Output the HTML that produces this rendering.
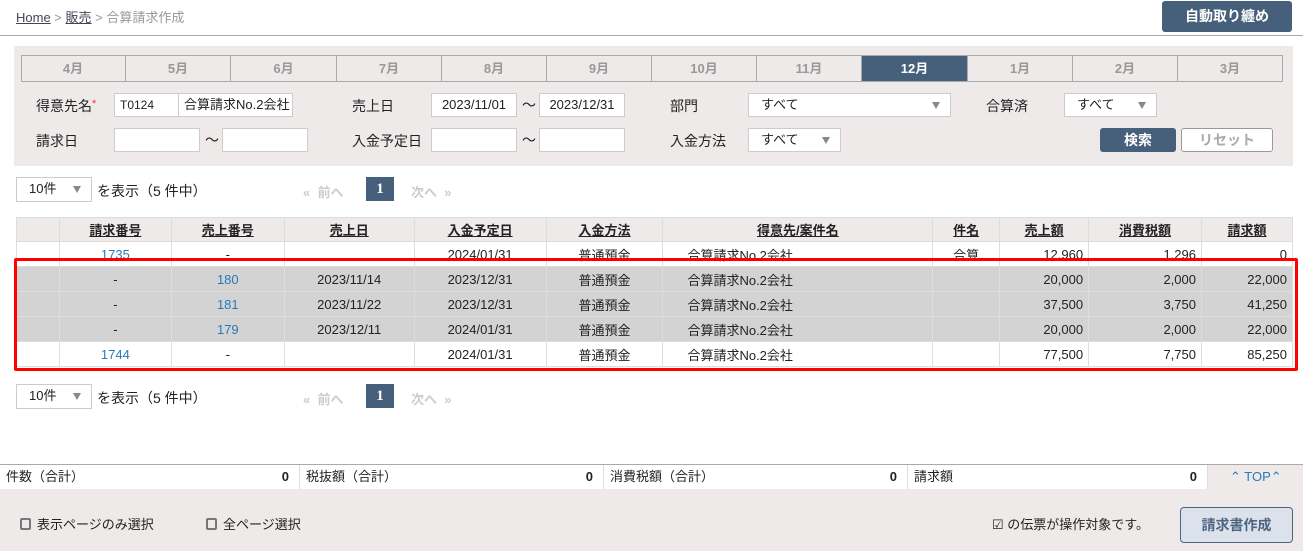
<!DOCTYPE html>
<html><head><meta charset="utf-8"><style>
*{box-sizing:border-box;margin:0;padding:0}
body{width:1303px;height:551px;position:relative;background:#fff;font-family:"Liberation Sans","Noto Sans CJK JP",sans-serif;font-size:13px;color:#222;overflow:hidden}
.a{position:absolute}
.inp{position:absolute;height:24px;background:#fff;border:1px solid #ccc;font-size:12px;line-height:22px;padding-left:5px}
.sel{position:absolute;height:24px;background:#fff;border:1px solid #ccc;font-size:13px;line-height:22px;padding-left:12px}
.sel:after{content:"";position:absolute;right:10px;top:8px;border-left:4px solid transparent;border-right:4px solid transparent;border-top:7px solid #888}
.lbl{position:absolute;font-size:14px}
.mon{position:absolute;top:55px;height:27px;border:1px solid #aaa;border-left:none;text-align:center;line-height:25px;font-weight:bold;color:#999;font-size:13px}
table{position:absolute;left:16px;top:217px;width:1277px;border-collapse:collapse;font-size:13px}
td,th{border:1px solid #ddd;height:25px;padding:0 5px;white-space:nowrap}
th{background:#eeeae9;font-weight:bold;text-decoration:underline;height:24px}
td{text-align:center}
td.r{text-align:right}
td.l{text-align:left;padding-left:24px}
tr.g td{background:#d3d3d3}
.lk{color:#2a7ab8}
.sum{position:absolute;top:465px;height:24px;line-height:24px;background:#fff;border-right:1px solid #ddd;font-size:13px;padding-left:6px}
.sum b{position:absolute;right:10px;top:0}
.cb{display:inline-block;width:11px;height:12px;border:2px solid #777;border-radius:2px;vertical-align:-1px;margin-right:6px}
</style></head><body>
<div class="a" style="left:16px;top:7px;font-size:13px;color:#999"><span style="color:#445;text-decoration:underline">Home</span> &gt; <span style="color:#445;text-decoration:underline">販売</span> &gt; 合算請求作成</div>
<div class="a" style="left:1162px;top:1px;width:130px;height:31px;background:#465f7a;border-radius:3px;color:#fff;font-weight:bold;font-size:14px;text-align:center;line-height:31px">自動取り纏め</div>
<div class="a" style="left:0;top:35px;width:1303px;height:1px;background:#aaa"></div>

<div class="a" style="left:14px;top:46px;width:1279px;height:120px;background:#eeeae9"></div>
<div class="a" style="left:21px;top:55px;width:1px;height:27px;background:#aaa"></div>
<div class="mon" style="left:21px;width:105px">4月</div>
<div class="mon" style="left:126px;width:105px">5月</div>
<div class="mon" style="left:231px;width:106px">6月</div>
<div class="mon" style="left:337px;width:105px">7月</div>
<div class="mon" style="left:442px;width:105px">8月</div>
<div class="mon" style="left:547px;width:105px">9月</div>
<div class="mon" style="left:652px;width:105px">10月</div>
<div class="mon" style="left:757px;width:105px">11月</div>
<div class="mon" style="left:862px;width:106px;background:#465f7a;color:#fff">12月</div>
<div class="mon" style="left:968px;width:105px">1月</div>
<div class="mon" style="left:1073px;width:105px">2月</div>
<div class="mon" style="left:1178px;width:105px">3月</div>

<div class="lbl" style="left:36px;top:96px">得意先名<span style="color:#e33;font-size:11px;vertical-align:4px">*</span></div>
<div class="inp" style="left:114px;top:93px;width:65px">T0124</div>
<div class="inp" style="left:178px;top:93px;width:115px;font-size:13px">合算請求No.2会社</div>
<div class="lbl" style="left:352px;top:96px">売上日</div>
<div class="inp" style="left:431px;top:93px;width:86px;text-align:center;padding:0;font-size:13px">2023/11/01</div>
<div class="lbl" style="left:522px;top:95px">〜</div>
<div class="inp" style="left:539px;top:93px;width:86px;text-align:center;padding:0;font-size:13px">2023/12/31</div>
<div class="lbl" style="left:670px;top:96px">部門</div>
<div class="sel" style="left:748px;top:93px;width:203px">すべて</div>
<div class="lbl" style="left:986px;top:96px">合算済</div>
<div class="sel" style="left:1064px;top:93px;width:93px">すべて</div>

<div class="lbl" style="left:36px;top:131px">請求日</div>
<div class="inp" style="left:114px;top:128px;width:86px"></div>
<div class="lbl" style="left:205px;top:130px">〜</div>
<div class="inp" style="left:222px;top:128px;width:86px"></div>
<div class="lbl" style="left:352px;top:131px">入金予定日</div>
<div class="inp" style="left:431px;top:128px;width:86px"></div>
<div class="lbl" style="left:522px;top:130px">〜</div>
<div class="inp" style="left:539px;top:128px;width:86px"></div>
<div class="lbl" style="left:670px;top:131px">入金方法</div>
<div class="sel" style="left:748px;top:128px;width:93px">すべて</div>
<div class="a" style="left:1100px;top:128px;width:76px;height:24px;background:#465f7a;border-radius:3px;color:#fff;font-weight:bold;text-align:center;line-height:24px;font-size:14px">検索</div>
<div class="a" style="left:1181px;top:128px;width:92px;height:24px;background:#fff;border:1px solid #999;border-radius:3px;color:#aaa;font-weight:bold;text-align:center;line-height:22px;font-size:14px">リセット</div>

<div class="sel" style="left:16px;top:177px;width:76px;height:25px;padding-left:12px">10件</div>
<div class="a" style="left:97px;top:181px;font-size:14px">を表示（5 件中）</div>
<div class="a" style="left:303px;top:182px;color:#ccc;font-weight:bold;font-size:13px">«&nbsp; 前へ</div>
<div class="a" style="left:366px;top:177px;width:28px;height:24px;background:#465f7a;color:#fff;text-align:center;line-height:24px;font-weight:bold;font-family:'Liberation Serif',serif;font-size:15px">1</div>
<div class="a" style="left:411px;top:182px;color:#ccc;font-weight:bold;font-size:13px">次へ &nbsp;»</div>

<table>
<tr><th style="width:43px"></th><th style="width:112px">請求番号</th><th style="width:113px">売上番号</th><th style="width:130px">売上日</th><th style="width:132px">入金予定日</th><th style="width:117px">入金方法</th><th style="width:270px">得意先/案件名</th><th style="width:67px">件名</th><th style="width:89px">売上額</th><th style="width:113px">消費税額</th><th style="width:91px">請求額</th></tr>
<tr><td></td><td class="lk">1735</td><td>-</td><td></td><td>2024/01/31</td><td>普通預金</td><td class="l">合算請求No.2会社</td><td>合算</td><td class="r">12,960</td><td class="r">1,296</td><td class="r">0</td></tr>
<tr class="g"><td></td><td>-</td><td class="lk">180</td><td>2023/11/14</td><td>2023/12/31</td><td>普通預金</td><td class="l">合算請求No.2会社</td><td></td><td class="r">20,000</td><td class="r">2,000</td><td class="r">22,000</td></tr>
<tr class="g"><td></td><td>-</td><td class="lk">181</td><td>2023/11/22</td><td>2023/12/31</td><td>普通預金</td><td class="l">合算請求No.2会社</td><td></td><td class="r">37,500</td><td class="r">3,750</td><td class="r">41,250</td></tr>
<tr class="g"><td></td><td>-</td><td class="lk">179</td><td>2023/12/11</td><td>2024/01/31</td><td>普通預金</td><td class="l">合算請求No.2会社</td><td></td><td class="r">20,000</td><td class="r">2,000</td><td class="r">22,000</td></tr>
<tr><td></td><td class="lk">1744</td><td>-</td><td></td><td>2024/01/31</td><td>普通預金</td><td class="l">合算請求No.2会社</td><td></td><td class="r">77,500</td><td class="r">7,750</td><td class="r">85,250</td></tr>
</table>
<div class="a" style="left:14px;top:258px;width:1284px;height:113px;border:3px solid #f00;border-radius:2px"></div>

<div class="sel" style="left:16px;top:384px;width:76px;height:25px;padding-left:12px">10件</div>
<div class="a" style="left:97px;top:388px;font-size:14px">を表示（5 件中）</div>
<div class="a" style="left:303px;top:389px;color:#ccc;font-weight:bold;font-size:13px">«&nbsp; 前へ</div>
<div class="a" style="left:366px;top:384px;width:28px;height:24px;background:#465f7a;color:#fff;text-align:center;line-height:24px;font-weight:bold;font-family:'Liberation Serif',serif;font-size:15px">1</div>
<div class="a" style="left:411px;top:389px;color:#ccc;font-weight:bold;font-size:13px">次へ &nbsp;»</div>

<div class="a" style="left:0;top:464px;width:1303px;height:1px;background:#aaa"></div>
<div class="sum" style="left:0;width:300px">件数（合計）<b>0</b></div>
<div class="sum" style="left:300px;width:304px">税抜額（合計）<b>0</b></div>
<div class="sum" style="left:604px;width:304px">消費税額（合計）<b>0</b></div>
<div class="sum" style="left:908px;width:300px">請求額<b>0</b></div>
<div class="a" style="left:1208px;top:465px;width:95px;height:24px;background:#eeeae9;color:#2a7ab8;line-height:24px;padding-left:22px;font-size:13px">&#8963; TOP&#8963;</div>
<div class="a" style="left:0;top:489px;width:1303px;height:62px;background:#eeeae9"></div>
<div class="a" style="left:20px;top:514px;font-size:13px"><span class="cb"></span>表示ページのみ選択</div>
<div class="a" style="left:206px;top:514px;font-size:13px"><span class="cb"></span>全ページ選択</div>
<div class="a" style="left:992px;top:514px;font-size:13px">☑ の伝票が操作対象です。</div>
<div class="a" style="left:1180px;top:507px;width:113px;height:36px;background:#dbe2eb;border:1px solid #4e6580;border-radius:4px;color:#4e6580;font-weight:bold;text-align:center;line-height:34px;font-size:14px">請求書作成</div>
</body></html>
